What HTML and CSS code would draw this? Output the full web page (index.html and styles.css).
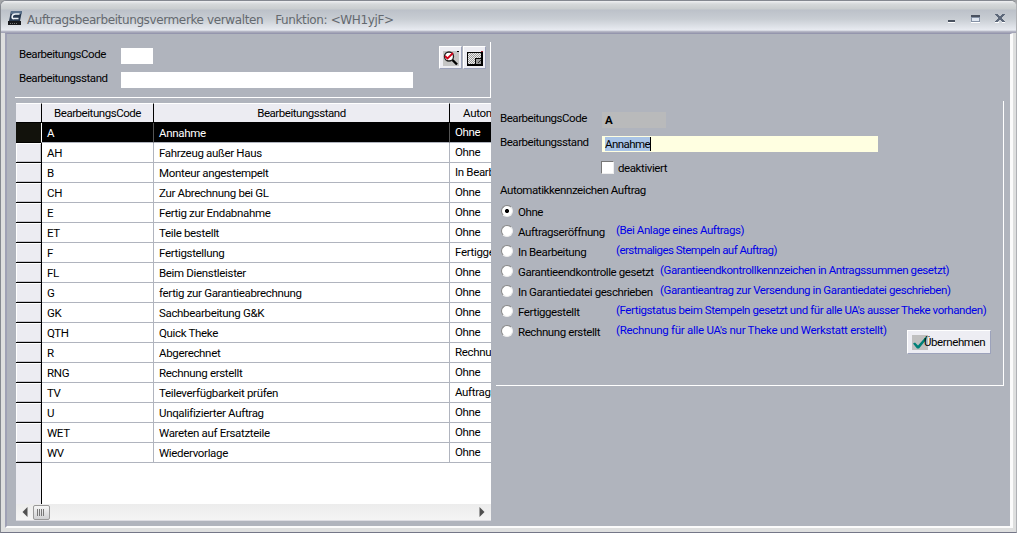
FILE: index.html
```html
<!DOCTYPE html>
<html lang="de">
<head>
<meta charset="utf-8">
<title>Auftragsbearbeitungsvermerke verwalten</title>
<link rel="stylesheet" href="styles.css">
</head>
<body>
<div class="window">
  <header class="titlebar">
    <svg class="app-icon" width="15" height="15" viewBox="0 0 15 15">
      <path d="M3 0H14L12 10H1Z" fill="#26384f"/><path d="M3 0H14L13.5 3H2.5Z" fill="#59708a"/>
      <path d="M11.500 3H7.500Q4.500 3 4.200 5.500T6 7.500H10.500" fill="none" stroke="#eef3f8" stroke-width="1.600"/>
      <path d="M0 10H13V14H0Z" fill="#16181c"/><path d="M2 12.500H10" stroke="#777" stroke-dasharray="1 1"/>
    </svg>
    <h1 class="title">Auftragsbearbeitungsvermerke verwalten</h1>
    <span class="title function">Funktion: &lt;WH1yjF&gt;</span>
    <svg class="controls" width="58" height="12" viewBox="0 0 58 12" shape-rendering="crispEdges">
      <path d="M0 7H7V9H0Z" fill="#4a5260"/><path d="M0 9H7V10H0Z" fill="#fff"/>
      <path d="M23 2H32V9H23Z" fill="#8592a6"/><path d="M23 2H32V4H23Z" fill="#4a5260"/><path d="M24 5H31V8H24Z" fill="#dfe6f0"/><path d="M23 9H32V10H23Z" fill="#fff"/>
      <path d="M47 9.500H51M54 9.500H57" stroke="#fff"/>
      <path d="M47 1H50V2H51V3H53V2H54V1H57V2H56V3H55V4H54V6H55V7H56V8H57V9H54V8H53V7H51V8H50V9H47V8H48V7H49V6H50V4H49V3H48V2H47Z" fill="#5d687a"/>
    </svg>
  </header>
  <main class="client">
    <section class="left">
      <div class="filter">
        <div class="fields">
          <label class="field"><span class="caption">BearbeitungsCode</span><span class="input short"></span></label>
          <label class="field"><span class="caption">Bearbeitungsstand</span><span class="input long"></span></label>
        </div>
        <div class="tools">
          <span class="tool"><svg width="18" height="18" viewBox="0 0 18 18">
            <path d="M1 2H17V17H1Z" fill="#c5c5c5"/><circle cx="7" cy="7.500" r="4.500" fill="#fff" stroke="#222" stroke-width="1.300"/>
            <path d="M10.500 11L15 15.500" stroke="#000" stroke-width="2.400"/><path d="M3 7L5.500 9.500L11 4" fill="none" stroke="#d00018" stroke-width="1.800"/><path d="M15 2.500H17" stroke="#000"/>
          </svg></span>
          <span class="tool"><svg width="18" height="18" viewBox="0 0 18 18" shape-rendering="crispEdges">
            <defs><pattern id="dots" width="2" height="2" patternUnits="userSpaceOnUse"><path d="M0 0H2V2H0Z" fill="#eee"/><path d="M0 0H1V1H0ZM1 1H2V2H1Z" fill="#999"/></pattern></defs>
            <path d="M1 3H17V17H1Z" fill="#000"/><path d="M2 4H15V15H2Z" fill="url(#dots)"/>
            <path d="M9 9H16V16H9Z" fill="#000"/><path d="M10 10H15V15H10Z" fill="#999"/><path d="M11 14H12V13H13V12H14V11H15V12H14V13H13V14Z" fill="#333"/><path d="M15 2H17V3H15Z" fill="#a02030"/>
          </svg></span>
        </div>
      </div>
      <div class="grid">
        <div class="head"><span></span><span>BearbeitungsCode</span><span>Bearbeitungsstand</span><span>Automatik</span></div>
        <div class="row selected"><i></i><span>A</span><span>Annahme</span><span>Ohne</span></div>
        <div class="row"><i></i><span>AH</span><span>Fahrzeug außer Haus</span><span>Ohne</span></div>
        <div class="row"><i></i><span>B</span><span>Monteur angestempelt</span><span>In Bearbeitung</span></div>
        <div class="row"><i></i><span>CH</span><span>Zur Abrechnung bei GL</span><span>Ohne</span></div>
        <div class="row"><i></i><span>E</span><span>Fertig zur Endabnahme</span><span>Ohne</span></div>
        <div class="row"><i></i><span>ET</span><span>Teile bestellt</span><span>Ohne</span></div>
        <div class="row"><i></i><span>F</span><span>Fertigstellung</span><span>Fertiggestellt</span></div>
        <div class="row"><i></i><span>FL</span><span>Beim Dienstleister</span><span>Ohne</span></div>
        <div class="row"><i></i><span>G</span><span>fertig zur Garantieabrechnung</span><span>Ohne</span></div>
        <div class="row"><i></i><span>GK</span><span>Sachbearbeitung G&amp;K</span><span>Ohne</span></div>
        <div class="row"><i></i><span>QTH</span><span>Quick Theke</span><span>Ohne</span></div>
        <div class="row"><i></i><span>R</span><span>Abgerechnet</span><span>Rechnung erstellt</span></div>
        <div class="row"><i></i><span>RNG</span><span>Rechnung erstellt</span><span>Ohne</span></div>
        <div class="row"><i></i><span>TV</span><span>Teileverfügbarkeit prüfen</span><span>Auftragseröffnung</span></div>
        <div class="row"><i></i><span>U</span><span>Unqalifizierter Auftrag</span><span>Ohne</span></div>
        <div class="row"><i></i><span>WET</span><span>Wareten auf Ersatzteile</span><span>Ohne</span></div>
        <div class="row"><i></i><span>WV</span><span>Wiedervorlage</span><span>Ohne</span></div>
        <div class="empty"></div>
        <div class="scrollbar">
          <svg width="6" height="10" viewBox="0 0 6 10"><path d="M5.500 0V10L0.500 5Z" fill="#505050"/></svg>
          <span class="thumb"></span>
          <svg class="arrow-right" width="6" height="10" viewBox="0 0 6 10"><path d="M0.500 0V10L5.500 5Z" fill="#505050"/></svg>
        </div>
      </div>
    </section>
    <section class="details">
      <div class="entry"><span class="caption">BearbeitungsCode</span><span class="code-value">A</span></div>
      <div class="entry state"><span class="caption">Bearbeitungsstand</span><span class="state-value"><mark>Annahme</mark></span></div>
      <div class="check"><span class="box"></span><span>deaktiviert</span></div>
      <div class="group-title">Automatikkennzeichen Auftrag</div>
      <div class="option"><span class="radio on"></span><span class="name">Ohne</span></div>
      <div class="option"><span class="radio"></span><span class="name">Auftragseröffnung</span><span class="hint">(Bei Anlage eines Auftrags)</span></div>
      <div class="option"><span class="radio"></span><span class="name">In Bearbeitung</span><span class="hint tight">(erstmaliges Stempeln auf Auftrag)</span></div>
      <div class="option wide"><span class="radio"></span><span class="name">Garantieendkontrolle gesetzt</span><span class="hint">(Garantieendkontrollkennzeichen in Antragssummen gesetzt)</span></div>
      <div class="option wide"><span class="radio"></span><span class="name">In Garantiedatei geschrieben</span><span class="hint">(Garantieantrag zur Versendung in Garantiedatei geschrieben)</span></div>
      <div class="option"><span class="radio"></span><span class="name">Fertiggestellt</span><span class="hint">(Fertigstatus beim Stempeln gesetzt und für alle UA's ausser Theke vorhanden)</span></div>
      <div class="option"><span class="radio"></span><span class="name">Rechnung erstellt</span><span class="hint loose">(Rechnung für alle UA's nur Theke und Werkstatt erstellt)</span></div>
      <div class="apply"><svg width="16" height="15" viewBox="0 0 16 15"><path d="M0 0H16V15H0Z" fill="#c0c0c0"/><path d="M1 8.500L3 7.500L6 10.500L14 1.500L15 2L14 5L7 13.500H5Z" fill="#008078"/></svg><span>Übernehmen</span></div>
    </section>
  </main>
</div>
</body>
</html>
```
FILE: styles.css
```css
* { box-sizing: border-box; }
body {
  margin: 0;
  background: #a4a6a8;
  font: 11.5px/14px Roboto, "Liberation Sans", sans-serif;
  letter-spacing: -0.41px;
  color: #000;
  white-space: nowrap;
}
.window {
  height: 533px;
  display: flex;
  flex-direction: column;
  border: 1px solid #858990;
  border-bottom-color: #747687;
  border-right-color: #aeb0b4;
  border-radius: 6px 6px 0 0;
  background: #dedfdf;
  overflow: hidden;
}
.titlebar {
  height: 32px;
  flex: none;
  display: flex;
  align-items: flex-start;
  padding: 9px 10px 0 7px;
  background: linear-gradient(#f0f1f2 0, #d6d9da 3px, #c9cdce 8px, #bcc1c9 9px, #c8cdd3 18px, #e8ebf1 29px, #a4a5b7 31px, #a4a5b7 32px);
}
.app-icon { margin-top: 1px; }
.title {
  margin: 0 0 0 4px;
  font: 12px/20px "DejaVu Sans", sans-serif;
  letter-spacing: -0.38px;
  color: #64696f;
}
.function { margin-left: 12px; }
.controls { margin: 3px 0 0 auto; }
.client {
  flex: 1;
  display: flex;
  margin: 0 3px 4px 4px;
  border: solid;
  border-width: 1px 3px 2px 2px;
  border-color: #9495ad #fbfbfb #fbfbfb #9fa1b5;
  background: #b0b4bd;
}
.left { width: 484px; padding: 8px 0 0 8px; }
.filter {
  height: 56px;
  width: 476px;
  display: flex;
  justify-content: space-between;
  border: solid #fff;
  border-width: 0 1px 1px 0;
}
.fields { padding: 5px 0 0 4px; }
.field { display: flex; height: 24px; }
.caption { width: 102px; letter-spacing: -0.46px; }
.input { height: 16px; background: #fff; margin-top: 1px; }
.short { width: 32px; }
.long { width: 292px; }
.tools { display: flex; gap: 1px; padding: 4px 4px 0 0; }
.tool {
  width: 23px;
  height: 23px;
  padding: 2px;
  background: #ededf3;
  border: 1px solid;
  border-color: #fff #9ca2bb #9ca2bb #fff;
}
.grid {
  width: 475px;
  height: 418px;
  margin: 5px 0 0 1px;
  background: #fff;
  display: flex;
  flex-direction: column;
  overflow: hidden;
  border-bottom: 1px solid #dcdce2;
  letter-spacing: -0.33px;
}
.head, .row {
  display: grid;
  grid-template-columns: 26px 112px 296px 41px;
  flex: none;
}
.head { height: 20px; border-bottom: 1px solid #000; background: #ececf2; letter-spacing: -0.46px; }
.head span { border-right: 1px solid #000; border-top: 1px solid #fff; padding-top: 2px; text-align: center; overflow: hidden; }
.head span:last-child { border-right: 0; text-align: left; padding-left: 13px; letter-spacing: -0.3px; }
.row { height: 20px; }
.row > * { border-bottom: 1px solid #b0b4be; border-right: 1px solid #b0b4be; overflow: hidden; }
.row i { background: #ececf2; border-color: #000; box-shadow: inset 1px 1px #fff, inset -1px -1px #c4c4cc; }
.row span { padding: 3px 0 0 5px; }
.row span:last-child { border-right: 0; padding-top: 2px; }
.selected { background: #000; color: #fff; }
.selected i { background: #12120c; box-shadow: none; border-right-color: #fff; }
.selected span { border-right-color: #555; }
.empty { flex: 1; width: 26px; background: #ececf2; border-right: 1px solid #000; }
.scrollbar {
  height: 16px;
  flex: none;
  display: flex;
  align-items: center;
  padding: 0 6px;
  background: linear-gradient(#ececec, #f4f4f4);
}
.thumb {
  width: 17px;
  height: 15px;
  margin-left: 5px;
  border: 1px solid #999;
  border-radius: 2px;
  background: repeating-linear-gradient(90deg, #777 0 1px, transparent 1px 2px) 3px 3px / 8px 7px no-repeat, linear-gradient(#f6f6f6, #cfd0d2);
}
.arrow-right { margin-left: auto; }
.details {
  width: 508px;
  height: 285px;
  margin: 67px 0 0 5px;
  padding: 10px 12px 0 4px;
  border: solid #fff;
  border-width: 0 1px 1px 0;
  display: flex;
  flex-direction: column;
}
.entry { display: flex; height: 25px; flex: none; }
.code-value { width: 64px; height: 16px; margin-top: 1px; padding: 1px 3px; background: #b9babb; font-weight: bold; }
.state .caption { margin-top: -1px; }
.state-value { width: 276px; height: 16px; padding: 1px 3px; background: #ffffe1; }
mark { display: inline-block; height: 14px; background: #a9c4e6; border-right: 1px solid #000; color: #000; letter-spacing: -0.55px; }
.check { display: flex; height: 20px; padding-left: 101px; gap: 4px; }
.box { width: 13px; height: 13px; background: #fff; border: 1px solid; border-color: #777 #eee #eee #777; }
.group-title { height: 20px; padding-top: 2px; }
.option { display: flex; height: 20px; align-items: center; }
.radio {
  width: 12px;
  height: 12px;
  flex: none;
  margin: 0 5px 0 1px;
  border: 1px solid;
  border-color: #888 #eee #eee #888;
  border-radius: 50%;
  background: #fff;
}
.on { background: radial-gradient(circle, #000 0 1.800px, #fff 2.300px); }
.name { width: 98px; flex: none; padding-top: 1px; }
.wide .name { width: 142px; }
.hint { color: #0000e8; margin-top: -3px; }
.tight { letter-spacing: -0.55px; }
.loose { letter-spacing: -0.28px; }
.apply {
  width: 84px;
  height: 24px;
  flex: none;
  margin: -11px 0 0 auto;
  padding: 3px 0 0 4px;
  display: flex;
  background: #ededf3;
  border: 1px solid;
  border-color: #fff #9ca2bb #9ca2bb #fff;
}
.apply svg { flex: none; margin-top: 1px; }
.apply span { margin-left: -4px; padding-top: 1px; }
```
